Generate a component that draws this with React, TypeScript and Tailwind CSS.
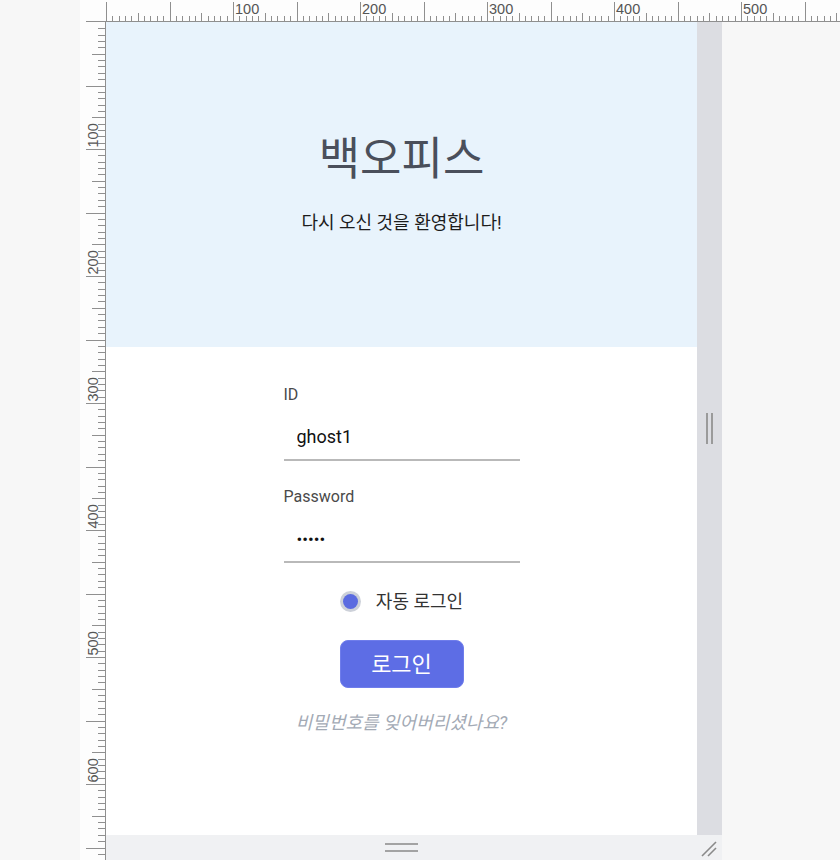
const STEP = 6.35;

function TopRuler() {
  const ticks: { x: number; v: number }[] = [];
  for (let i = 0; 26 + i * STEP < 760; i++) ticks.push({ x: Math.round(26 + i * STEP) + 0.5, v: i * 5 });
  return (
    <svg width={760} height={22} className="block shrink-0">
      <line x1={26} y1={21.5} x2={760} y2={21.5} stroke="#8f8f8f" />
      <line x1={6} y1={21.5} x2={26} y2={21.5} stroke="#8f8f8f" />
      {ticks.map(({ x, v }) => {
        const top = v % 50 === 0 ? 2 : v % 25 === 0 ? 13 : 16;
        return <line key={v} x1={x} y1={top} x2={x} y2={22} stroke="#8f8f8f" />;
      })}
      {ticks
        .filter(({ v }) => v > 0 && v % 100 === 0)
        .map(({ x, v }) => (
          <text key={v} x={x + 1.5} y={14} fontSize={14.5} fill="#555" fontFamily="Liberation Sans, Arial, sans-serif">
            {v}
          </text>
        ))}
    </svg>
  );
}

function LeftRuler() {
  const ticks: { y: number; v: number }[] = [];
  for (let i = 1; i * STEP < 838; i++) ticks.push({ y: Math.round(i * STEP) + 0.5, v: i * 5 });
  return (
    <svg width={26} height={838} className="block shrink-0">
      <line x1={25.5} y1={0} x2={25.5} y2={838} stroke="#8f8f8f" />
      {ticks.map(({ y, v }) => {
        const left = v % 50 === 0 ? 6 : v % 25 === 0 ? 12 : 18;
        return <line key={v} x1={left} y1={y} x2={26} y2={y} stroke="#8f8f8f" />;
      })}
      {ticks
        .filter(({ v }) => v % 100 === 0)
        .map(({ y, v }) => (
          <text key={v} transform={`translate(17.5 ${y - 2}) rotate(-90)`} fontSize={14.5} fill="#555" fontFamily="Liberation Sans, Arial, sans-serif">
            {v}
          </text>
        ))}
    </svg>
  );
}

function Field({ label, value, type = "text" }: { label: string; value: string; type?: string }) {
  return (
    <div className="flex w-[236px] flex-col">
      <label className="h-5 text-[16px] leading-5 text-[#4a4a4a]">{label}</label>
      <input
        readOnly
        type={type}
        defaultValue={value}
        className={`mt-[9px] h-[47px] border-b-2 border-[#b9b9b9] bg-transparent px-[13px] text-[#111] outline-none ${type === "password" ? "text-[17px]" : "text-[18px]"}`}
      />
    </div>
  );
}

function LoginFrame() {
  return (
    <div className="flex w-[591px] flex-col bg-white">
      <header className="flex h-[325px] flex-col items-center bg-[#e8f3fc] pt-[112px]">
        <h1 className="text-[45px] leading-[52px] text-[#4a4f5b]">백오피스</h1>
        <p className="mt-[25px] text-[18px] leading-6 text-[#1c1c1c]">다시 오신 것을 환영합니다!</p>
      </header>
      <form className="flex flex-col items-center pt-[38px]">
        <Field label="ID" value="ghost1" />
        <div className="mt-[26px]">
          <Field label="Password" value="ghost" type="password" />
        </div>
        <div className="mt-[26px] flex h-6 items-center gap-[15px]">
          <span className="grid size-[21px] place-items-center rounded-full bg-[#cdd1d9]">
            <span className="size-[15px] rounded-full bg-[#5b6be0]" />
          </span>
          <span className="text-[18px] text-[#333]">자동 로그인</span>
        </div>
        <button type="button" className="mt-[27px] h-12 w-[124px] rounded-lg border border-[#6f7deb] bg-[#5d6de5] text-[22px] text-white">
          로그인
        </button>
        <a className="mt-[23px] text-[18px] italic leading-6 text-[#a3aab5]">비밀번호를 잊어버리셨나요?</a>
      </form>
    </div>
  );
}

export default function App() {
  return (
    <div className="flex h-[860px] w-[840px] overflow-hidden bg-[#f7f7f7] font-['Roboto','Noto_Sans_CJK_KR',sans-serif]">
      <div className="w-20 shrink-0" />
      <div className="flex flex-col bg-[#fdfdfd]">
        <TopRuler />
        <div className="flex">
          <LeftRuler />
          <div className="flex w-[616px] flex-col">
            <div className="flex h-[813px]">
              <LoginFrame />
              <div className="flex w-[25px] items-center justify-center gap-[3px] bg-[#dcdde2]">
                <span className="h-[31px] w-[2px] bg-[#9a9a9a]" />
                <span className="h-[31px] w-[2px] bg-[#9a9a9a]" />
              </div>
            </div>
            <div className="relative flex h-[25px] flex-col items-center justify-center gap-[5px] bg-[#f0f1f3]">
              <span className="ml-[-25px] h-[2px] w-[33px] bg-[#a3a3a3]" />
              <span className="ml-[-25px] h-[2px] w-[33px] bg-[#a3a3a3]" />
              <svg width={18} height={18} className="absolute right-[4px] top-[4px]">
                <line x1={2} y1={17} x2={16} y2={3} stroke="#8a8a8a" strokeWidth={1.6} />
                <line x1={8} y1={17} x2={16} y2={9} stroke="#8a8a8a" strokeWidth={1.6} />
              </svg>
            </div>
          </div>
          <div className="flex-1 bg-[#f7f7f7]" />
        </div>
      </div>
    </div>
  );
}
